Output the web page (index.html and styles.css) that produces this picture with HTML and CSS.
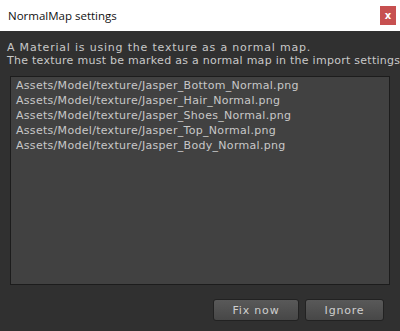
FILE: index.html
```html
<!DOCTYPE html>
<html lang="en">
<head>
  <meta charset="UTF-8">
  <title>NormalMap settings</title>
  <link rel="stylesheet" href="styles.css">
</head>
<body>

  <div class="window">
    <div class="titlebar">
      <span class="title">NormalMap settings</span>
      <span class="close-btn">x</span>
    </div>

    <div class="content">
      <p class="message">
        <span class="line line-1">A Material is using the texture as a normal map.</span>
        <span class="line line-2">The texture must be marked as a normal map in the import settings</span>
      </p>

      <!-- textures that need fixing -->
      <div class="file-list">
        <div class="file">Assets/Model/texture/Jasper_Bottom_Normal.png</div>
        <div class="file">Assets/Model/texture/Jasper_Hair_Normal.png</div>
        <div class="file">Assets/Model/texture/Jasper_Shoes_Normal.png</div>
        <div class="file">Assets/Model/texture/Jasper_Top_Normal.png</div>
        <div class="file">Assets/Model/texture/Jasper_Body_Normal.png</div>
      </div>

      <div class="buttons">
        <button class="btn btn-fix">Fix now</button>
        <button class="btn btn-ignore">Ignore</button>
      </div>
    </div>
  </div>

</body>
</html>
```

FILE: styles.css
```css
body {
  margin: 0;
  background-color: #303030;
  font-family: "DejaVu Sans", Verdana, sans-serif;
}

.window {
  width: 400px;
  height: 331px;
  display: flex;
  flex-direction: column;
}

.titlebar {
  height: 31px;
  background-color: #fff;
  display: flex;
  align-items: center;
  justify-content: space-between;
  padding: 0 4px 0 8px;
}

.title {
  font-family: "Open Sans", "Noto Sans", sans-serif;
  font-size: 11.5px;
  color: #111;
}

.close-btn {
  width: 16px;
  height: 19px;
  background-color: #c75050;
  color: #fff;
  font-size: 10px;
  font-weight: bold;
  display: flex;
  align-items: center;
  justify-content: center;
}

.content {
  flex: 1;
  display: flex;
  flex-direction: column;
  padding: 10px 10px 10px 10px;
}

.message {
  margin: 0 0 0 -3px;
  font-size: 11px;
  line-height: 13px;
  color: #c8c8c8;
  white-space: nowrap;
}

.line {
  display: block;
}

.line-1 {
  letter-spacing: 0.8px;
}

.line-2 {
  letter-spacing: 0.27px;
}

.file-list {
  box-sizing: border-box;
  margin-top: 9px;
  height: 209px;
  background-color: #414141;
  border: 1px solid #1c1c1c;
  padding: 1px 5px;
}

.file {
  font-size: 11px;
  line-height: 15px;
  letter-spacing: 0.3px;
  color: #c8c8c8;
}

.buttons {
  display: flex;
  justify-content: flex-end;
  gap: 6px;
  margin-top: 14px;
  padding-right: 6px;
}

.btn {
  height: 22px;
  border: 1px solid #222;
  border-radius: 3px;
  background: linear-gradient(#595959, #474747);
  color: #cfcfcf;
  font-family: "DejaVu Sans", Verdana, sans-serif;
  font-size: 11px;
  letter-spacing: 0.8px;
  padding: 0;
}

.btn-fix {
  width: 86px;
}

.btn-ignore {
  width: 79px;
}
```
